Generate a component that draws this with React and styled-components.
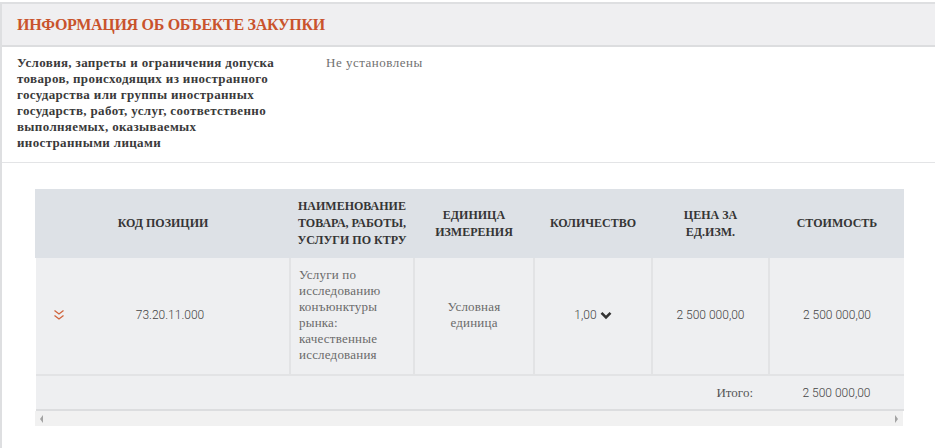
import React from 'react';
import styled, { createGlobalStyle } from 'styled-components';

const GlobalStyle = createGlobalStyle`
  html, body {
    margin: 0;
    padding: 0;
    background: #fff;
    overflow: hidden;
  }
  body {
    font-family: "Liberation Serif", serif;
    color: #333;
  }
`;

const Page = styled.div`
  padding-top: 2px;
  width: 960px;
`;

const Panel = styled.section`
  border: 2px solid #dedfe1;
  border-right: none;
  background: #fff;
`;

const PanelHeader = styled.header`
  background: #efeff1;
  border-bottom: 2px solid #dcdddf;
  height: 41px;
  display: flex;
  align-items: center;
  padding-left: 15px;
`;

const Title = styled.h2`
  margin: 0;
  font-size: 16px;
  font-weight: bold;
  letter-spacing: -0.3px;
  color: #c9532c;
`;

const InfoRow = styled.div`
  display: grid;
  grid-template-columns: 309px 1fr;
  padding: 8px 15px 8px 15px;
  border-bottom: 1px solid #e3e4e6;
  min-height: 99px;
`;

const Label = styled.div`
  font-size: 13px;
  font-weight: bold;
  letter-spacing: 0.35px;
  line-height: 16px;
  color: #3a3a3a;
  white-space: nowrap;
`;

const Value = styled.div`
  font-size: 13px;
  letter-spacing: 0.5px;
  line-height: 16px;
  color: #707070;
`;

const TableWrap = styled.div`
  padding: 26px 0 40px 33px;
`;

const Scroller = styled.div`
  width: 868px;
`;

const Table = styled.table`
  width: 868px;
  table-layout: fixed;
  border-collapse: collapse;
  font-size: 12px;
`;

const Th = styled.th`
  background: #dde1e6;
  font-weight: bold;
  color: #353535;
  line-height: 17px;
  height: 69px;
  padding: 0;
  text-align: center;
  vertical-align: middle;
  white-space: nowrap;
  border-left: 2px solid #dde1e6;
`;

const Td = styled.td`
  background: #eeeff1;
  color: #6a6a6a;
  font-size: 13px;
  letter-spacing: 0.2px;
  line-height: 16px;
  padding: 9px 8px 11px;
  text-align: ${p => (p.$left ? 'left' : 'center')};
  vertical-align: middle;
  border-left: 2px solid #e2e3e5;
  border-bottom: 2px solid #e2e3e5;
  &:first-child {
    border-left: none;
  }
`;

const CodeCell = styled.div`
  display: flex;
  align-items: center;
  color: #444;
  font-family: "Roboto", "Liberation Sans", sans-serif;
  font-weight: 300;
  font-size: 12px;
  letter-spacing: 0;
`;

const ExpandIcon = styled.svg`
  width: 12px;
  height: 12px;
  margin-left: 9px;
  flex: none;
`;

const CodeText = styled.span`
  flex: 1;
  text-align: center;
  padding-right: 6px;
`;

const Qty = styled.span`
  display: inline-flex;
  align-items: center;
  gap: 3px;
`;

const FootTd = styled.td`
  background: #eeeff1;
  color: #555;
  font-size: 13px;
  height: 33px;
  padding: 0 16px;
  text-align: ${p => (p.$right ? 'right' : 'center')};
  vertical-align: middle;
  border-bottom: 2px solid #dcdddf;
`;

const ScrollBar = styled.div`
  height: 15px;
  background: #f1f1f1;
  display: flex;
  align-items: center;
  justify-content: space-between;
  padding: 0 5px;
`;

const Arrow = styled.span`
  width: 0;
  height: 0;
  border-top: 4px solid transparent;
  border-bottom: 4px solid transparent;
  ${p =>
    p.$dir === 'left'
      ? 'border-right: 3px solid #a3a3a3;'
      : 'border-left: 3px solid #a3a3a3;'}
`;

const Num = styled.span`
  font-family: "Roboto", "Liberation Sans", sans-serif;
  font-weight: 300;
  font-size: 12px;
  letter-spacing: 0;
  color: #444;
`;

const DoubleChevron = () => (
  <ExpandIcon viewBox="0 0 12 12">
    <polyline points="1.5,1.5 6,5 10.5,1.5" fill="none" stroke="#d0633b" strokeWidth="1.3" />
    <polyline points="1.5,6.5 6,10 10.5,6.5" fill="none" stroke="#d0633b" strokeWidth="1.3" />
  </ExpandIcon>
);

const ChevronDown = () => (
  <svg width="12" height="9" viewBox="0 0 12 9">
    <polyline points="1.5,1.8 6,6.3 10.5,1.8" fill="none" stroke="#333" strokeWidth="2.6" />
  </svg>
);

const columns = [
  { w: 254, lines: ['КОД ПОЗИЦИИ'] },
  { w: 124, lines: ['НАИМЕНОВАНИЕ', 'ТОВАРА, РАБОТЫ,', 'УСЛУГИ ПО КТРУ'] },
  { w: 120, lines: ['ЕДИНИЦА', 'ИЗМЕРЕНИЯ'] },
  { w: 118, lines: ['КОЛИЧЕСТВО'] },
  { w: 117, lines: ['ЦЕНА ЗА', 'ЕД.ИЗМ.'] },
  { w: 135, lines: ['СТОИМОСТЬ'] },
];

const labelLines = [
  'Условия, запреты и ограничения допуска',
  'товаров, происходящих из иностранного',
  'государства или группы иностранных',
  'государств, работ, услуг, соответственно',
  'выполняемых, оказываемых',
  'иностранными лицами',
];

export default function App() {
  return (
    <Page>
      <GlobalStyle />
      <Panel>
        <PanelHeader>
          <Title>ИНФОРМАЦИЯ ОБ ОБЪЕКТЕ ЗАКУПКИ</Title>
        </PanelHeader>
        <InfoRow>
          <Label>
            {labelLines.map(l => (
              <div key={l}>{l}</div>
            ))}
          </Label>
          <Value>Не установлены</Value>
        </InfoRow>
        <TableWrap>
          <Scroller>
            <Table>
              <colgroup>
                {columns.map(c => (
                  <col key={c.lines[0]} style={{ width: c.w }} />
                ))}
              </colgroup>
              <thead>
                <tr>
                  {columns.map(c => (
                    <Th key={c.lines[0]}>
                      {c.lines.map(l => (
                        <div key={l}>{l}</div>
                      ))}
                    </Th>
                  ))}
                </tr>
              </thead>
              <tbody>
                <tr>
                  <Td>
                    <CodeCell>
                      <DoubleChevron />
                      <CodeText>73.20.11.000</CodeText>
                    </CodeCell>
                  </Td>
                  <Td $left>Услуги по исследованию конъюнктуры рынка: качественные исследования</Td>
                  <Td>
                    <div>Условная</div>
                    <div>единица</div>
                  </Td>
                  <Td>
                    <Qty>
                      <Num>1,00</Num>
                      <ChevronDown />
                    </Qty>
                  </Td>
                  <Td><Num>2 500 000,00</Num></Td>
                  <Td><Num>2 500 000,00</Num></Td>
                </tr>
              </tbody>
              <tfoot>
                <tr>
                  <FootTd colSpan={5} $right>Итого:</FootTd>
                  <FootTd><Num>2 500 000,00</Num></FootTd>
                </tr>
              </tfoot>
            </Table>
            <ScrollBar>
              <Arrow $dir="left" />
              <Arrow $dir="right" />
            </ScrollBar>
          </Scroller>
        </TableWrap>
      </Panel>
    </Page>
  );
}
